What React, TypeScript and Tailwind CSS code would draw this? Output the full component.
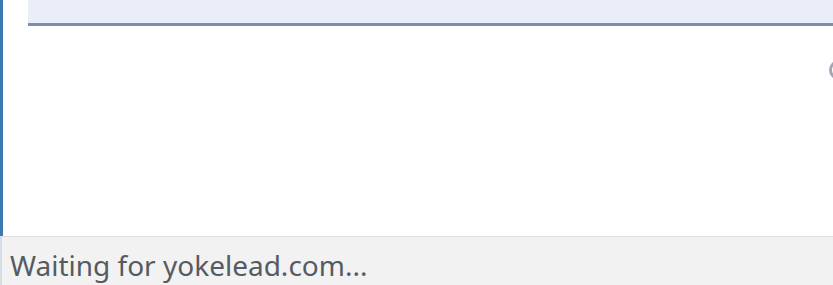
import React from 'react';

export default function App() {
  return (
    <div className="w-[833px] h-[285px] flex flex-col bg-white overflow-hidden">
      <div className="flex-1 flex border-l-[3px] border-[#3a77b3]">
        <div className="flex-1 flex flex-col pl-[25px]">
          <div className="h-[26px] bg-[#e9eef8] border-b-[3px] border-[#7a8fae]" />
          <div className="flex justify-end pt-[34px]">
            <div className="w-[20px] h-[20px] rounded-full border-[3px] border-[#a4a4b4] mr-[-16px]" />
          </div>
        </div>
      </div>
      <div className="h-[49px] bg-[#f2f2f2] border-t border-[#dedede] border-l-2 border-l-[#d6dde6] flex items-center pl-[8px]">
        <span
          className="text-[28px] text-[#555b62] leading-none pt-[7px]"
          style={{ fontFamily: '"Noto Sans", "Open Sans", sans-serif' }}
        >
          Waiting for yokelead.com...
        </span>
      </div>
    </div>
  );
}
